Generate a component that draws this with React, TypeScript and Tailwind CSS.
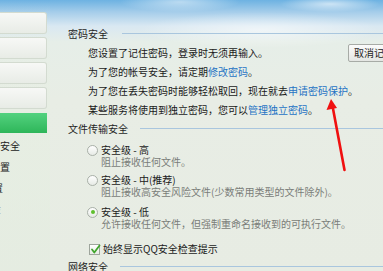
import React from "react";

const font = { fontFamily: '"Noto Sans CJK SC", "Noto Sans", sans-serif' };

function Header({ title, lineLeft }: { title: string; lineLeft: string }) {
  return (
    <div className="flex h-[19px] items-center leading-[19px] text-[#1f1f1f]">
      <span className="shrink-0">{title}</span>
      <div className={`h-px flex-1 bg-[#a9c6de] ${lineLeft}`} />
    </div>
  );
}

function Radio({ checked }: { checked?: boolean }) {
  return (
    <span className="flex h-[11px] w-[11px] shrink-0 items-center justify-center rounded-full border border-[#a9b0a8] bg-gradient-to-b from-[#ffffff] to-[#e7ebe6]">
      {checked && <span className="h-[4px] w-[4px] rounded-full bg-[#5fbf2e]" />}
    </span>
  );
}

export default function App() {
  const sideBtn =
    "h-[22px] w-[47px] rounded-r-[3px] border border-l-0 border-[#d3dbd0] bg-gradient-to-b from-[#f7f8f6] to-[#e8ece6]";
  return (
    <div
      className="relative h-[271px] w-[383px] overflow-hidden text-[10px] text-[#1a1a1a]"
      style={{
        ...font,
        background:
          "radial-gradient(ellipse 60px 10px at 180px 2px, rgba(255,255,255,0.5), transparent), radial-gradient(ellipse 50px 8px at 330px 4px, rgba(255,255,255,0.6), transparent), radial-gradient(ellipse 120px 18px at 260px 30px, rgba(255,255,255,0.55), transparent), linear-gradient(to bottom, #6db2e2 0px, #a5cdea 12px, #d9e8f2 26px, #e6eee8 42px, #e8ede5 100px, #e7ece3 271px)",
      }}
    >
      <div className="flex h-full">
        {/* sidebar */}
        <div className="flex w-[50px] shrink-0 flex-col bg-gradient-to-b from-transparent via-[#e6efe2]/60 to-[#e3ece0]/60 pt-[12px]">
          <div className="flex flex-col gap-[3px]">
            <div className={sideBtn} />
            <div className={sideBtn} />
            <div className={sideBtn} />
            <div className={sideBtn} />
          </div>
          <div className="mt-[4px] h-[20px] w-[47px] bg-gradient-to-b from-[#52d27f] to-[#2db659]" />
          <div className="mt-[2px] flex flex-col leading-[21px] text-[#222]">
            <div className="flex w-[20px] justify-end overflow-hidden whitespace-nowrap">文件安全</div>
            <div className="flex w-[10px] justify-end overflow-hidden whitespace-nowrap">设置</div>
            <div className="flex w-[3px] justify-end overflow-hidden whitespace-nowrap">设置</div>
            <div className="flex w-[1px] justify-end overflow-hidden whitespace-nowrap text-[#999]">设</div>
          </div>
        </div>

        {/* main */}
        <div className="flex flex-1 flex-col pl-[18px] pt-[24px]">
          <Header title="密码安全" lineLeft="ml-[14px]" />
          <div className="flex flex-col pl-[20px]">
            <div className="flex h-[19px] items-center leading-[19px]">
              <span className="w-[260px] shrink-0 whitespace-nowrap">您设置了记住密码，登录时无须再输入。</span>
              <button className="h-[18px] shrink-0 whitespace-nowrap rounded-[2px] border border-[#a7aba6] bg-gradient-to-b from-[#fbfbfb] to-[#e4e6e3] px-[5px] text-[10px] leading-[16px] text-[#1f1f1f]">
                取消记住密码
              </button>
            </div>
            <div className="h-[19px] whitespace-nowrap leading-[19px]">
              为了您的帐号安全，请定期<span className="text-[#1f73c4]">修改密码</span>。
            </div>
            <div className="h-[19px] whitespace-nowrap leading-[19px]">
              为了您在丢失密码时能够轻松取回，现在就去<span className="text-[#1f73c4]">申请密码保护</span>。
            </div>
            <div className="h-[19px] whitespace-nowrap leading-[19px]">
              某些服务将使用到独立密码，您可以<span className="text-[#1f73c4]">管理独立密码</span>。
            </div>
          </div>
          <Header title="文件传输安全" lineLeft="ml-[12px]" />

          <div className="flex flex-col pl-[19px]">
            <div className="mt-[6px] flex h-[12px] items-center gap-[3px] whitespace-nowrap leading-[12px]">
              <Radio />
              <span>安全级 - 高</span>
            </div>
            <div className="h-[12px] whitespace-nowrap pl-[14px] leading-[12px] text-[#7a7d79]">
              阻止接收任何文件。
            </div>
            <div className="mt-[6px] flex h-[12px] items-center gap-[3px] whitespace-nowrap leading-[12px]">
              <Radio />
              <span>安全级 - 中(推荐)</span>
            </div>
            <div className="h-[12px] whitespace-nowrap pl-[14px] leading-[12px] text-[#7a7d79]">
              阻止接收高安全风险文件(少数常用类型的文件除外)。
            </div>
            <div className="mt-[8px] flex h-[12px] items-center gap-[3px] whitespace-nowrap leading-[12px]">
              <Radio checked />
              <span>安全级 - 低</span>
            </div>
            <div className="h-[12px] whitespace-nowrap pl-[14px] leading-[12px] text-[#7a7d79]">
              允许接收任何文件，但强制重命名接收到的可执行文件。
            </div>
            <div className="mt-[12px] flex h-[14px] items-center gap-[3px] whitespace-nowrap pl-[2px] leading-[14px]">
              <span className="relative flex h-[11px] w-[11px] shrink-0 items-center justify-center border border-[#9ea59c] bg-gradient-to-b from-white to-[#e8ebe6]">
                <svg width="11" height="11" viewBox="0 0 11 11" className="absolute -top-[1px] left-0">
                  <path d="M2 5.5 L4.3 8.5 L9.5 1.5" fill="none" stroke="#3fa52c" strokeWidth="1.8" strokeLinecap="round" strokeLinejoin="round" />
                </svg>
              </span>
              <span>始终显示QQ安全检查提示</span>
            </div>
          </div>
          <div className="mt-[1px]">
            <Header title="网络安全" lineLeft="ml-[12px]" />
          </div>
        </div>
      </div>

      {/* red annotation arrow */}
      <svg className="pointer-events-none absolute left-0 top-0" width="383" height="271" viewBox="0 0 383 271">
        <line x1="344.5" y1="170" x2="332.5" y2="106" stroke="#f01010" strokeWidth="2.6" strokeLinecap="round" />
        <polygon points="331,99 326.5,110 337,108" fill="#f01010" />
      </svg>
    </div>
  );
}
